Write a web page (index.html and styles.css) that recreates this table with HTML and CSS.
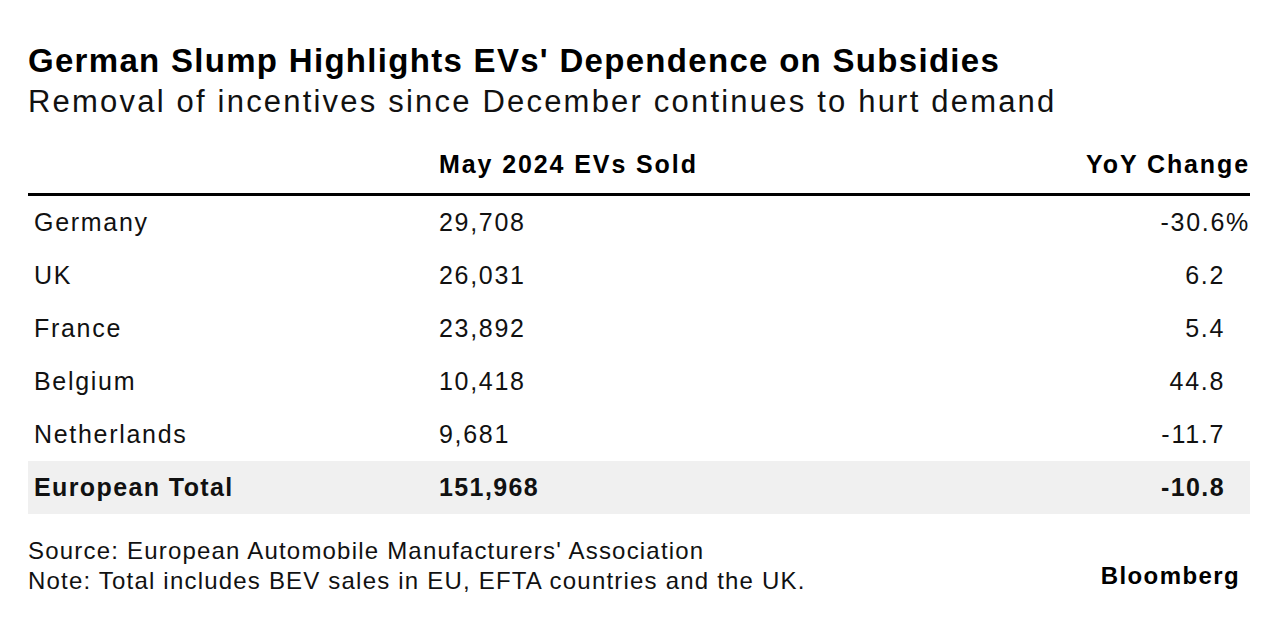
FILE: index.html
```html
<!DOCTYPE html>
<html>
<head>
<meta charset="utf-8">
<link rel="stylesheet" href="styles.css">
</head>
<body>
<div class="chart">
  <h1 class="title">German Slump Highlights EVs' Dependence on Subsidies</h1>
  <p class="subtitle">Removal of incentives since December continues to hurt demand</p>
  <table class="tbl">
    <thead>
      <tr>
        <th class="c1"></th>
        <th class="c2">May 2024 EVs Sold</th>
        <th class="c3">YoY Change</th>
      </tr>
    </thead>
    <tbody>
      <tr><td class="c1">Germany</td><td class="c2">29,708</td><td class="c3">-30.6<span class="pct">%</span></td></tr>
      <tr><td class="c1">UK</td><td class="c2">26,031</td><td class="c3">6.2</td></tr>
      <tr><td class="c1">France</td><td class="c2">23,892</td><td class="c3">5.4</td></tr>
      <tr><td class="c1">Belgium</td><td class="c2">10,418</td><td class="c3">44.8</td></tr>
      <tr><td class="c1">Netherlands</td><td class="c2">9,681</td><td class="c3">-11.7</td></tr>
      <tr class="total"><td class="c1">European Total</td><td class="c2">151,968</td><td class="c3">-10.8</td></tr>
    </tbody>
  </table>
  <div class="footer">
    <div class="notes">
      <div>Source: European Automobile Manufacturers' Association</div>
      <div>Note: Total includes BEV sales in EU, EFTA countries and the UK.</div>
    </div>
    <div class="logo">Bloomberg</div>
  </div>
</div>
</body>
</html>
```
FILE: styles.css
```css
html, body {
  margin: 0;
  padding: 0;
  background: #ffffff;
}
body {
  font-family: "Liberation Sans", Arial, sans-serif;
  color: #000;
}
.chart {
  width: 1222px;
  padding: 42px 0 0 28px;
}
.title {
  margin: 0;
  font-size: 33px;
  font-weight: 700;
  line-height: 38px;
  letter-spacing: 1.3px;
  white-space: nowrap;
}
.subtitle {
  margin: 4px 0 0 0;
  font-size: 31px;
  font-weight: 400;
  line-height: 36px;
  letter-spacing: 2.2px;
  color: #111;
  white-space: nowrap;
}
.tbl {
  width: 1222px;
  margin-top: 20px;
  border-collapse: collapse;
  font-size: 25px;
  letter-spacing: 1.7px;
}
.tbl th {
  font-weight: 700;
  height: 49px;
  padding: 0 0 4px 0;
  vertical-align: middle;
  border-bottom: 3px solid #000;
  letter-spacing: 1.9px;
}
.tbl td {
  height: 53px;
  padding: 0;
  vertical-align: middle;
  color: #111;
}
.c1 {
  width: 405px;
  text-align: left;
  padding-left: 6px !important;
}
.c2 {
  text-align: left;
}
.c3 {
  text-align: right;
  padding-right: 25px !important;
}
.tbl th.c3 {
  padding-right: 0 !important;
}
.pct {
  margin-right: -25px;
}
.total td {
  background: #f0f0f0;
  font-weight: 700;
  letter-spacing: 1.4px;
}
.footer {
  display: flex;
  justify-content: space-between;
  align-items: flex-end;
  margin-top: 22px;
}
.notes {
  font-size: 24px;
  line-height: 30px;
  letter-spacing: 1.2px;
  color: #111;
  white-space: nowrap;
}
.logo {
  font-size: 24px;
  line-height: 30px;
  font-weight: 700;
  letter-spacing: 1.4px;
  margin-right: 10px;
  margin-bottom: 5px;
}
```
